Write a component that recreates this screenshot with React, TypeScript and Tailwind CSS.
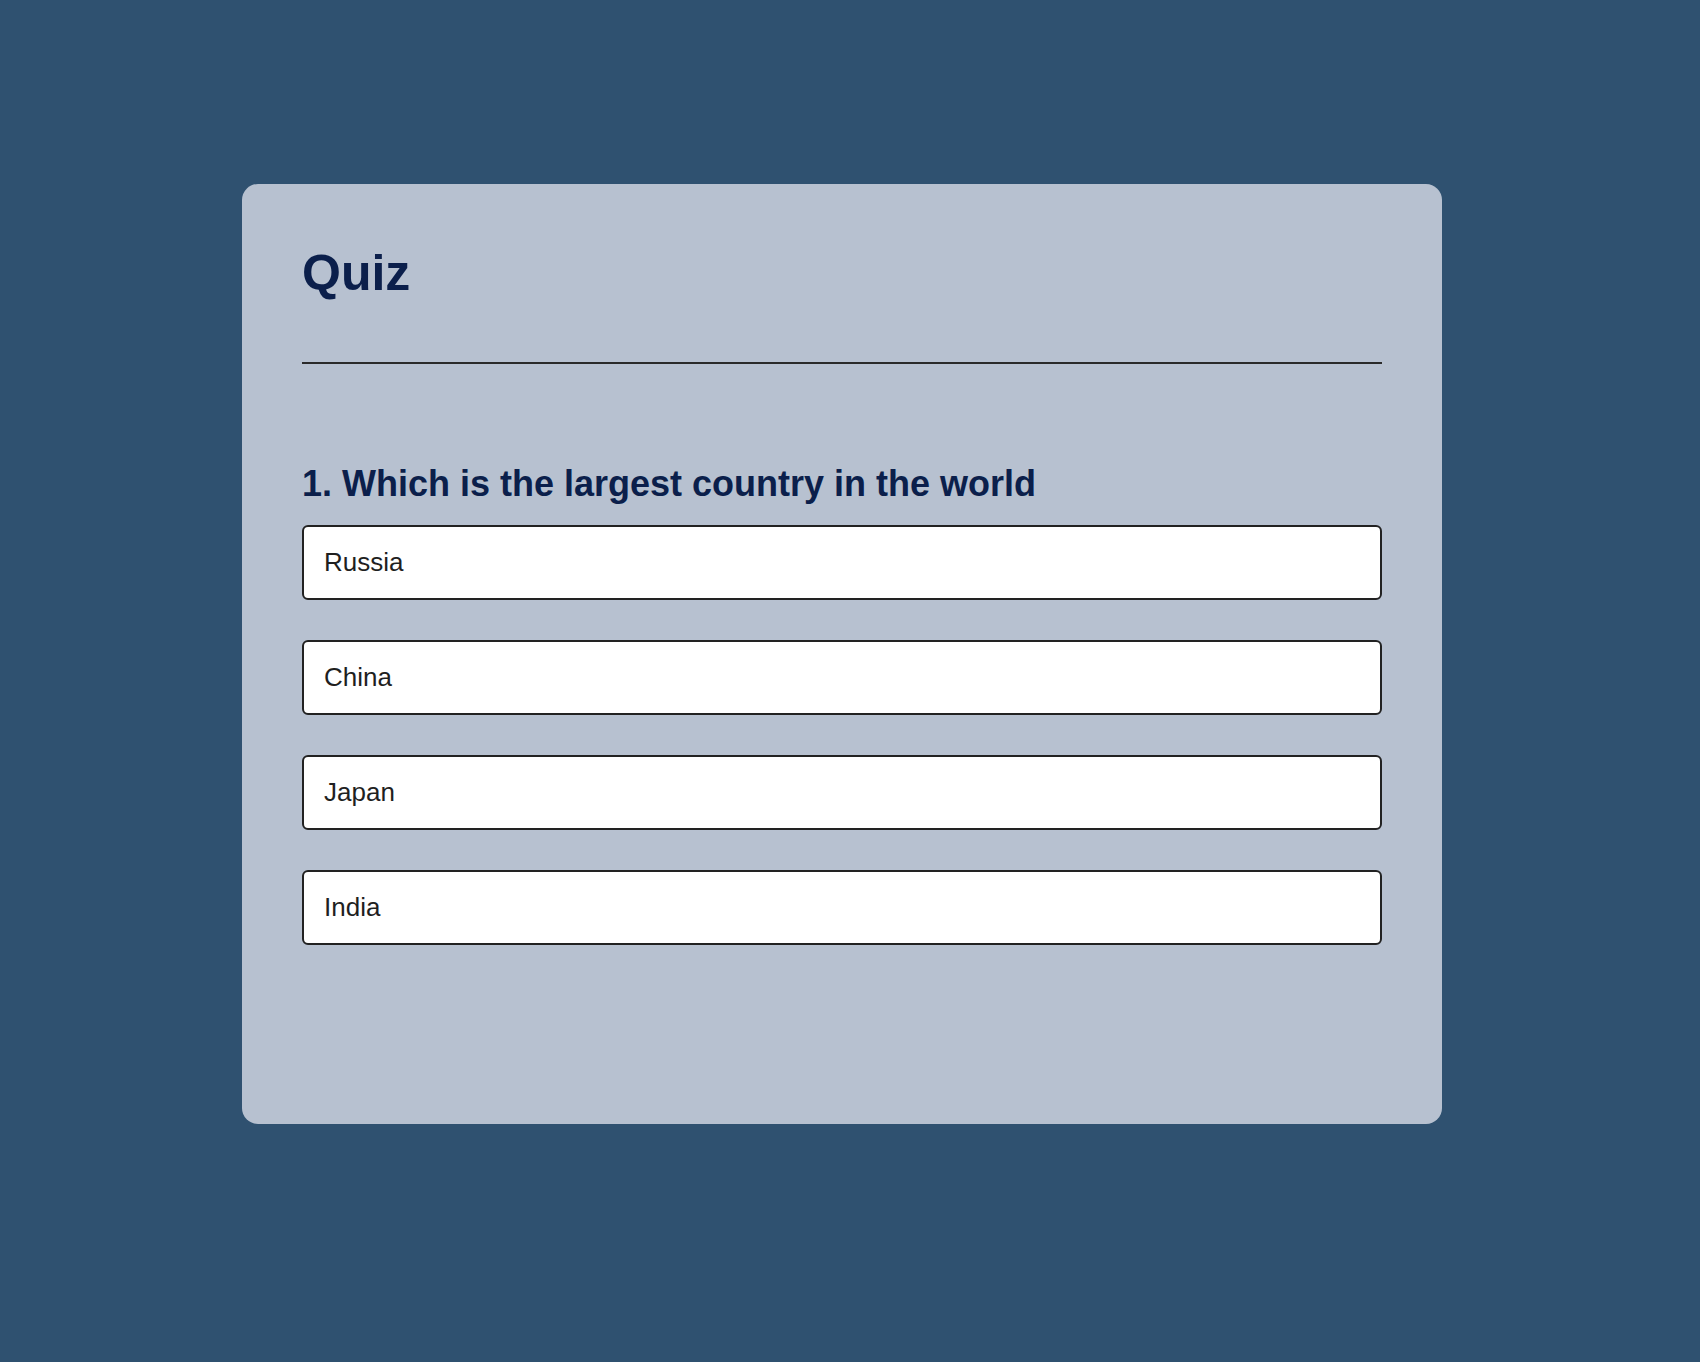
import React from "react";

const options = ["Russia", "China", "Japan", "India"];

export default function App() {
  return (
    <div
      className="min-h-[1362px] w-full bg-[#2f5170] pt-[184px]"
      style={{ fontFamily: '"Liberation Sans", Arial, sans-serif' }}
    >
      <div className="ml-[242px] flex h-[940px] w-[1200px] flex-col rounded-[16px] bg-[#b7c1d0] px-[60px] pt-[62px]">
        <h1 className="text-[50px] font-bold leading-[54px] text-[#0b1f4b]">Quiz</h1>
        <div className="mt-[62px] h-[2px] w-full bg-[#2a2a2a]" />
        <h2 className="mt-[100px] text-[36px] font-bold leading-[40px] text-[#0b1f4b]">
          1. Which is the largest country in the world
        </h2>
        <div className="mt-[21px] flex flex-col gap-[40px]">
          {options.map((o) => (
            <div
              key={o}
              className="flex h-[75px] items-center rounded-[6px] border-2 border-[#222222] bg-white pl-[20px] text-[26px] text-[#1f1f1f]"
            >
              {o}
            </div>
          ))}
        </div>
      </div>
    </div>
  );
}
